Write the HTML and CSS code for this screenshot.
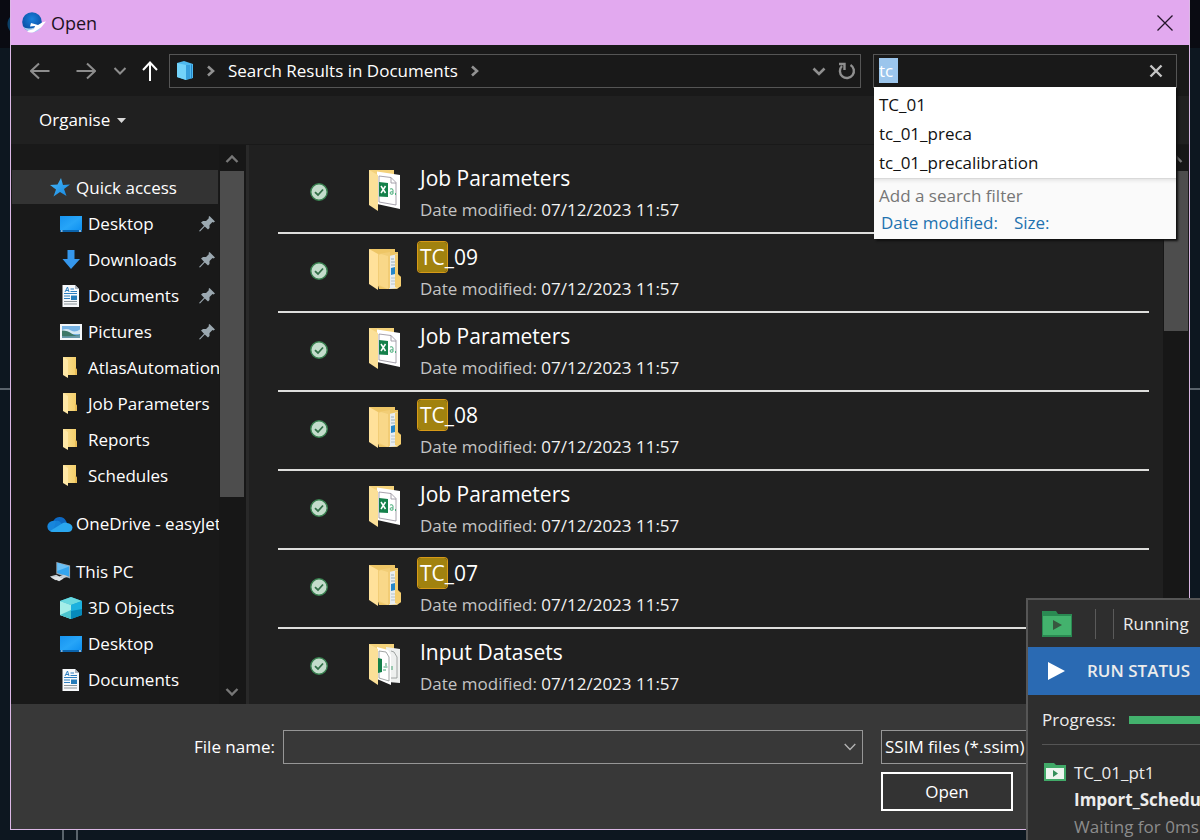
FILE: index.html
```html
<!DOCTYPE html>
<html lang="en-GB">
<head>
<meta charset="utf-8">
<title>Open</title>
<link rel="stylesheet" href="styles.css">
</head>
<body>
<svg class="sprite" aria-hidden="true">
  <defs>
    <linearGradient id="g-desk" x1="0" y1="0" x2="1" y2="1"><stop offset="0" stop-color="#1793f0"/><stop offset=".5" stop-color="#27a5f8"/><stop offset="1" stop-color="#0a8df0"/></linearGradient>
    <linearGradient id="g-fold" x1="0" y1="0" x2="1" y2="0"><stop offset="0" stop-color="#fbe29a"/><stop offset="1" stop-color="#f3cd66"/></linearGradient>
    <linearGradient id="g-star" x1="0" y1="0" x2="1" y2="1"><stop offset="0" stop-color="#4ab9f8"/><stop offset="1" stop-color="#1486e0"/></linearGradient>
    <radialGradient id="g-globe" cx=".5" cy=".35" r=".6"><stop offset="0" stop-color="#1a80dc"/><stop offset="1" stop-color="#0a4fa4"/></radialGradient>
  </defs>
  <symbol id="desktop" viewBox="0 0 22 22"><path d="M0 3h22v16H0z" fill="url(#g-desk)"/><path d="M0 17h22v2H0z" fill="#0a64ad"/><path d="M1 18h1.500M19 18h2" stroke="#fff"/></symbol>
  <symbol id="download" viewBox="0 0 22 22"><path d="M7.500 1h7v9H20l-9 10L2.500 10h5z" fill="#3597ec"/></symbol>
  <symbol id="document" viewBox="0 0 22 22"><path d="M2.500 0H15l4 4v18H2.500z" fill="#f7f9fb"/><path d="M15 0v4h4z" fill="#aab4bd"/><path d="M5 7l2.500-5L9 7M6 5.500h3M10.500 4H14M10.500 6.500H17M4 8.500h13M4 11h6M4 13.500h6" stroke="#2d7fc0" fill="none"/><path d="M11 10.500h6V15h-6z" fill="#257cba"/><path d="M4 16.500h13M4 19h13" stroke="#8b9499"/></symbol>
  <symbol id="picture" viewBox="0 0 22 22"><path d="M0 3h22v16H0z" fill="#f3f6f8"/><path d="M2 5h18v12H2z" fill="#77b3e4"/><path d="M2 9q5-2 9 .5t9-1V13H2z" fill="#d6e8f3"/><path d="M2 9.500q6 0 9.500 3t8.500 1V16H2z" fill="#3e7866"/><path d="M2 15q9 1 18-1v3H2z" fill="#6798a8"/></symbol>
  <symbol id="folder" viewBox="0 0 22 22"><path d="M3 0h13v11l1 2v5H7z" fill="url(#g-fold)"/><path d="M3 0l5 3v18l-5-3z" fill="#ffe8a6"/><path d="M15 10l2 3v5h-2z" fill="#e9bd57"/></symbol>
  <symbol id="star" viewBox="0 0 22 22"><path d="M12 1l2 7 7-.5-6 4.500 2.500 7-6.500-4-6.500 4.500 2.500-7-6-4.500 7.500-.5z" fill="url(#g-star)"/></symbol>
  <symbol id="cloud" viewBox="0 0 26 18"><path d="M6 7a7 7 0 0 1 13-1l2 4-14 4z" fill="#0d68c2"/><path d="M1 9q3-4 8-3l8 5-11 6a5.500 5.500 0 0 1-5-8z" fill="#1786dc"/><path d="M9 6q3-1 5 2l8 7-5 2H6z" fill="#1480d7"/><path d="M3 16l13-8q2-1 4 0 5 .5 5.500 4.500Q25 17 21 17H6q-2 0-3-1z" fill="#2aa7ef"/></symbol>
  <symbol id="pc" viewBox="0 0 24 24"><path d="M8 1l15 4v14L8 14z" fill="#9aaab5"/><path d="M9 2l13 4v11L9 13z" fill="#35a5ee"/><path d="M9 2l13 4-13 5z" fill="#6bc0f5"/><path d="M1 17l7-2 5 3-6 3zM11 17l5-2 5 2-6 2z" fill="#c4ccd2"/><path d="M2 18l8-1 6 2-5 3z" fill="#dfe3e5"/></symbol>
  <symbol id="cube" viewBox="0 0 22 22"><path d="M11 0l11 4v14l-11 4-11-4V4z" fill="#19a7cb"/><path d="M0 4l11-4 11 4-11 4z" fill="#69d9df"/><path d="M0 4l11 4v14L0 18z" fill="#a4eee8"/><path d="M0 18l11-5v9z" fill="#4bc4ce"/><path d="M11 22V13l11-9v14z" fill="#068abb"/><path d="M11 8l11-4v8l-11 2z" fill="#1cb1df"/></symbol>
  <symbol id="pin" viewBox="0 0 16 16"><path d="M10.500 0L16 5.500l-1.500 1-1-.5-3 3v3L9 13.500 5.800 10.500 1 15.500 0 15l5-5.300L2 6.500 4 5h3l3-3-.5-1z" fill="#9ba8b0"/></symbol>
  <symbol id="check" viewBox="0 0 18 18"><circle cx="9" cy="9" r="8.200" fill="#c3dccb" stroke="#398250" stroke-width="1.400"/><path d="M5 9.200l3 2.800 5-5.500" fill="none" stroke="#326f48" stroke-width="1.800"/></symbol>
  <symbol id="folder-xls" viewBox="0 0 32 42"><path d="M0 1h25v30H0z" fill="#f4d27b"/><path d="M8 2.500L31 6v34L8 35z" fill="#fff"/><path d="M10 7l12 1.500 5 5V36L10 33zM22 8.500V14h5" fill="none" stroke="#918b98" stroke-width=".8"/><path d="M0 1l9 5v36l-9-6z" fill="#fbe098"/><path d="M10 13l9 1v14l-9-.5z" fill="#14804a"/><path d="M12 17l4.500 7M16.500 17L12 24" stroke="#fff" stroke-width="1.500"/><path d="M21 20q3-1 3 1v4q-3 1-3-1t3-1M26.500 24v2" fill="none" stroke="#4bad7c"/></symbol>
  <symbol id="folder-docs" viewBox="0 0 32 42"><path d="M0 1h26v3h3v22l3 3v9l-4 3H10z" fill="#eec666"/><path d="M20 8l9-2v34l-9 1z" fill="#e9edf0"/><path d="M22 11h3M22 14h4M22 17h4" stroke="#98afba"/><path d="M22 20l4-1v7l-4 1z" fill="#2586c9"/><path d="M22 30h4M22 33h4M22 36h4" stroke="#b7c4cb"/><path d="M9 6l12-2v36l-3 1-9-3z" fill="#f2cd76"/><path d="M0 1l9 5v36l-9-6z" fill="#ffe19a"/><path d="M12 6l7 2v33l-9-4V7z" fill="#f9d889"/><path d="M26 7l3-1v21l3 2v9l-4 2-2-1z" fill="#f5ce70"/></symbol>
  <symbol id="folder-data" viewBox="0 0 32 42"><path d="M0 1h25v30H0z" fill="#f4d27b"/><path d="M17 4l14 2v34l-12-1z" fill="#eef0ef"/><path d="M8 4l11 3 3 5v30L8 36z" fill="#fff"/><path d="M10 8l7 1 3 5v24l-10-3zM22 8l3 1 3 5v21h-6" fill="none" stroke="#8b908f" stroke-width=".8"/><path d="M0 1l9 5v36l-9-6z" fill="#fbe098"/><path d="M9 15l4 1v13l-4 1z" fill="#14804a"/><path d="M17 20v3M14.500 24h4M23 23v4M14 27h3" stroke="#43a070"/></symbol>
</svg>

<div class="desktop">
  <main class="dialog">
    <header class="titlebar">
      <svg class="app-icon" viewBox="0 0 24 22" aria-hidden="true"><circle cx="10" cy="10" r="9.800" fill="url(#g-globe)"/><path d="M1 15q7 4 20-3l-4 6q-8 6-16-3z" fill="#a9d0f2"/><path d="M9 11l7 2 5-3 3-.5-5 6-7 4.500q-5 1.500-7-1l7-2 1-3-5 .5z" fill="#fff"/></svg>
      <h1>Open</h1>
      <button class="close" aria-label="Close"><svg viewBox="0 0 16 16"><path d="M.5.5l15 15M15.500.5l-15 15" stroke="#24152a" stroke-width="1.300"/></svg></button>
    </header>

    <div class="navbar">
      <nav class="history" aria-label="History">
        <button aria-label="Back"><svg viewBox="0 0 20 20"><path d="M19.500 10H1M9 2.500L1 10l8 7.500" stroke="#8d8d8d"/></svg></button>
        <button aria-label="Forward"><svg viewBox="0 0 20 20"><path d="M.5 10H19M11 2.500l8 7.500-8 7.500" stroke="#8d8d8d"/></svg></button>
        <button class="small" aria-label="Recent locations"><svg viewBox="0 0 14 20"><path d="M1.500 7L7 12.500 12.500 7" stroke="#8d8d8d"/></svg></button>
        <button aria-label="Up"><svg viewBox="0 0 20 20"><path d="M10 20V2M3 9l7-7.500L17 9" stroke="#fff"/></svg></button>
      </nav>
      <div class="address">
        <svg class="lib" viewBox="0 0 18 20" aria-hidden="true"><path d="M1 2l7-2 9 3v14l-7 2-9-3z" fill="#4eb9ee"/><path d="M1 2l9 2v15l-9-3z" fill="#73d3fa"/><path d="M11 4v14M13 4v14M15.500 3.500v14" stroke="#2387cc"/></svg>
        <svg class="crumb" viewBox="0 0 10 14" aria-hidden="true"><path d="M2 2.500L7 7l-5 4.500"/></svg>
        <span>Search Results in Documents</span>
        <svg class="crumb" viewBox="0 0 10 14" aria-hidden="true"><path d="M2 2.500L7 7l-5 4.500"/></svg>
        <button class="push" aria-label="Previous locations"><svg width="14" height="14" viewBox="0 0 14 14"><path d="M1.500 4.500L7 10l5.500-5.500" fill="none" stroke="#8f8f8f" stroke-width="2.600"/></svg></button>
        <button aria-label="Refresh"><svg width="18" height="18" viewBox="0 0 18 18"><path d="M12.500 3a7 7 0 1 1-8.500 1M1 2h5.500v6" fill="none" stroke="#8f8f8f" stroke-width="2.400"/></svg></button>
      </div>
      <div class="search">
        <input type="text" aria-label="Search" value="tc">
        <button aria-label="Clear search"><svg width="14" height="14" viewBox="0 0 14 14"><path d="M1.500 1.500l11 11M12.500 1.500l-11 11" stroke="#c6c6c6" stroke-width="2.400"/></svg></button>
        <div class="suggest">
          <ul>
            <li>TC_01</li>
            <li>tc_01_preca</li>
            <li>tc_01_precalibration</li>
          </ul>
          <div class="filters">
            <p>Add a search filter</p>
            <div class="filter-links"><a href="#date">Date modified:</a><a href="#size">Size:</a></div>
          </div>
        </div>
      </div>
    </div>

    <div class="toolbar"><button>Organise <svg width="9" height="5" viewBox="0 0 9 5" aria-hidden="true"><path d="M0 0h9L4.500 5z" fill="#d8d8d8"/></svg></button></div>

    <div class="content">
      <aside class="sidebar">
        <div class="tree">
          <ul>
            <li class="root selected"><svg><use href="#star"/></svg><span>Quick access</span></li>
            <li><svg><use href="#desktop"/></svg><span>Desktop</span><svg class="pin"><use href="#pin"/></svg></li>
            <li><svg><use href="#download"/></svg><span>Downloads</span><svg class="pin"><use href="#pin"/></svg></li>
            <li><svg><use href="#document"/></svg><span>Documents</span><svg class="pin"><use href="#pin"/></svg></li>
            <li><svg><use href="#picture"/></svg><span>Pictures</span><svg class="pin"><use href="#pin"/></svg></li>
            <li><svg><use href="#folder"/></svg><span>AtlasAutomation</span></li>
            <li><svg><use href="#folder"/></svg><span>Job Parameters</span></li>
            <li><svg><use href="#folder"/></svg><span>Reports</span></li>
            <li><svg><use href="#folder"/></svg><span>Schedules</span></li>
          </ul>
          <ul><li class="root"><svg><use href="#cloud"/></svg><span>OneDrive - easyJet</span></li></ul>
          <ul>
            <li class="root"><svg><use href="#pc"/></svg><span>This PC</span></li>
            <li><svg><use href="#cube"/></svg><span>3D Objects</span></li>
            <li><svg><use href="#desktop"/></svg><span>Desktop</span></li>
            <li><svg><use href="#document"/></svg><span>Documents</span></li>
          </ul>
        </div>
        <div class="scroll">
          <svg viewBox="0 0 14 10"><path d="M1.500 8L7 2.500 12.500 8"/></svg>
          <div class="thumb"></div>
          <svg viewBox="0 0 14 10"><path d="M1.500 2L7 7.500 12.500 2"/></svg>
        </div>
      </aside>

      <section class="results">
        <ul>
          <li><svg class="sync"><use href="#check"/></svg><svg class="kind"><use href="#folder-xls"/></svg><div><h2>Job Parameters</h2><p>Date modified: <time>07/12/2023 11:57</time></p></div></li>
          <li><svg class="sync"><use href="#check"/></svg><svg class="kind"><use href="#folder-docs"/></svg><div><h2><mark>TC</mark>_09</h2><p>Date modified: <time>07/12/2023 11:57</time></p></div></li>
          <li><svg class="sync"><use href="#check"/></svg><svg class="kind"><use href="#folder-xls"/></svg><div><h2>Job Parameters</h2><p>Date modified: <time>07/12/2023 11:57</time></p></div></li>
          <li><svg class="sync"><use href="#check"/></svg><svg class="kind"><use href="#folder-docs"/></svg><div><h2><mark>TC</mark>_08</h2><p>Date modified: <time>07/12/2023 11:57</time></p></div></li>
          <li><svg class="sync"><use href="#check"/></svg><svg class="kind"><use href="#folder-xls"/></svg><div><h2>Job Parameters</h2><p>Date modified: <time>07/12/2023 11:57</time></p></div></li>
          <li><svg class="sync"><use href="#check"/></svg><svg class="kind"><use href="#folder-docs"/></svg><div><h2><mark>TC</mark>_07</h2><p>Date modified: <time>07/12/2023 11:57</time></p></div></li>
          <li><svg class="sync"><use href="#check"/></svg><svg class="kind"><use href="#folder-data"/></svg><div><h2>Input Datasets</h2><p>Date modified: <time>07/12/2023 11:57</time></p></div></li>
        </ul>
        <div class="scroll">
          <svg viewBox="0 0 14 10"><path d="M1.500 8L7 2.500 12.500 8"/></svg>
          <div class="thumb short"></div>
        </div>
      </section>
    </div>

    <footer class="footer">
      <label for="filename">File name:</label>
      <div class="combo">
        <input id="filename" type="text">
        <button aria-label="Recent file names"><svg width="12" height="8" viewBox="0 0 12 8"><path d="M.7 1L6 6.500 11.300 1" fill="none" stroke="#b4b4b4" stroke-width="1.300"/></svg></button>
      </div>
      <div class="actions">
        <select aria-label="File type"><option>SSIM files (*.ssim)</option></select>
        <button class="open">Open</button>
      </div>
    </footer>
  </main>

  <section class="monitor" aria-label="Run monitor">
    <header>
      <svg width="30" height="26" viewBox="0 0 30 26" aria-hidden="true"><path d="M0 0h14l2 3h14v23H0z" fill="#2a8a52"/><path d="M1 5h28v19H1z" fill="#43b26d"/><path d="M11 9l9 5-9 5z" fill="#38573f"/></svg>
      <i></i><i></i><span>Running</span>
    </header>
    <h2><svg width="17" height="18" viewBox="0 0 17 18" aria-hidden="true"><path d="M0 0l17 9-17 9z" fill="#fff"/></svg>RUN STATUS</h2>
    <div class="progress"><label for="run">Progress:</label><progress id="run" value="100" max="100"></progress></div>
    <div class="job">
      <svg width="22" height="18" viewBox="0 0 22 18" aria-hidden="true"><path d="M0 0h10l2 2h10v16H0z" fill="#41a968"/><path d="M2 5h18v11H2z" fill="#edf5ef"/><path d="M9 7l5 3.500L9 14z" fill="#33905a"/></svg>
      <div><p>TC_01_pt1</p><p><strong>Import_Schedule</strong></p><p class="dim">Waiting for 0ms</p></div>
    </div>
  </section>
</div>
</body>
</html>
```

FILE: styles.css
```css
* { box-sizing: border-box; }
body, h1, h2, p, ul { margin: 0; padding: 0; }
ul { list-style: none; }
body { font: 17px/24px "Open Sans", "Noto Sans", sans-serif; color: #fff; background: #0d1720; }
button { margin: 0; padding: 0; border: 0; background: none; color: inherit; font: inherit; display: flex; align-items: center; }
input, select { font: inherit; color: inherit; }
svg { display: block; flex: none; }
.sprite { position: absolute; width: 0; height: 0; }

.desktop {
  position: relative;
  height: 100vh;
  min-height: 600px;
  overflow: hidden;
  display: flex;
  flex-direction: column;
  padding: 0 10px 10px;
  background:
    linear-gradient(#59636b, #59636b) 0 388px / 100% 2px no-repeat,
    linear-gradient(#59636b, #59636b) 62px 100% / 2px 10px no-repeat,
    linear-gradient(#59636b, #59636b) 76px 100% / 2px 10px no-repeat,
    radial-gradient(circle at 18px 24px, #0b3f66 10px, transparent 11px),
    linear-gradient(#0a0b12 48px, #0d1720 48px);
}
.dialog { flex: 1; min-height: 0; display: flex; flex-direction: column; background: #202020; border: 1px solid #dcb8e6; border-top: 0; }

.titlebar { height: 45px; display: flex; align-items: center; gap: 5px; padding: 0 16px 0 11px; background: #e2a9ef; color: #1d1122; }
.titlebar h1 { font-size: 18px; font-weight: 400; }
.app-icon { width: 24px; height: 22px; }
.close { margin-left: auto; }
.close svg { width: 16px; height: 16px; }

.navbar { height: 51px; display: flex; align-items: center; background: #191919; padding: 0 12px 0 19px; }
.history { display: flex; align-items: center; gap: 26px; margin-right: 9px; }
.history svg { width: 20px; height: 20px; fill: none; stroke-width: 2; }
.history button + .small { margin-left: -9px; }
.history .small svg { width: 14px; }
.history .small + button { margin-left: -13px; }
.address { flex: 1; height: 34px; display: flex; align-items: center; gap: 12px; padding: 0 4px 0 6px; border: 1px solid #555; }
.lib { width: 18px; height: 20px; }
.crumb { width: 10px; height: 14px; fill: none; stroke: #929292; stroke-width: 2.6; }
.push { margin-left: auto; }
.search { position: relative; width: 304px; height: 34px; margin-left: 12px; display: flex; align-items: center; padding: 0 13px 0 5px; border: 1px solid #555; }
.search input { flex: 1; min-width: 0; height: 25px; padding: 0; border: 0; outline: 0; background: linear-gradient(#9bc5ec, #9bc5ec) 0 0 / 19px 100% no-repeat; }
.suggest { position: absolute; z-index: 2; top: 32px; left: 0; right: 0; background: #fff; color: #111; box-shadow: 2px 2px 2px #101010; }
.suggest ul { padding: 3px 5px 1px; }
.suggest li { height: 29px; line-height: 29px; }
.filters { padding: 3px 5px 0; border-top: 1px solid #d9d9d9; background: #fafafa; color: #767676; line-height: 28px; box-shadow: inset 0 4px 4px -3px #ddd; }
.filter-links { display: flex; gap: 16px; padding: 0 2px 3px; line-height: 26px; }
.filter-links a { color: #2272b0; text-decoration: none; }

.toolbar { height: 48px; display: flex; align-items: center; padding: 0 28px; }
.toolbar button { gap: 7px; }

.content { flex: 1; min-height: 0; display: flex; border-top: 1px solid #191919; }
.sidebar { width: 238px; display: flex; background: #191919; border-right: 3px solid #292929; }
.tree { flex: 1; min-width: 0; overflow: hidden; padding: 25px 0 0 1px; }
.tree ul { margin-bottom: 12px; }
.tree li { height: 36px; display: flex; align-items: center; gap: 6px; padding-left: 48px; white-space: nowrap; }
.tree li svg { width: 22px; height: 22px; }
.tree li.root { gap: 3px; padding-left: 35px; }
.tree li.root svg { width: 26px; height: 22px; }
.tree li.selected { background: linear-gradient(#333, #333) 0 0 / calc(100% - 1px) 34px no-repeat; }
.tree li svg.pin { width: 16px; height: 16px; margin: 0 4px 0 auto; }
.scroll { flex: none; width: 27px; display: flex; flex-direction: column; align-items: center; padding: 9px 2px 7px 1px; background: #171717; }
.scroll svg { width: 14px; height: 10px; fill: none; stroke: #777; stroke-width: 2.4; }
.scroll svg:last-child { margin-top: auto; }
.scroll .thumb { width: 24px; height: 326px; margin-top: 7px; background: #4d4d4d; }
.results .scroll { width: 26px; padding: 9px 1px 7px; }
.scroll .thumb.short { height: 160px; }

.results { flex: 1; min-width: 0; display: flex; overflow: hidden; }
.results ul { flex: 1; padding: 10px 14px 0 29px; }
.results li { height: 79px; display: flex; align-items: center; padding-left: 32px; border-bottom: 2px solid #dededc; }
.results li:last-child { border-color: transparent; }
.sync { width: 18px; height: 18px; margin: 0 41px 4px 0; }
.kind { width: 32px; height: 42px; margin: 0 19px 8px 0; }
.results h2 { font-size: 21px; font-weight: 400; line-height: 32px; }
.results p { line-height: 31px; color: #c4c4c4; }
.results time { color: #f2f2f2; }
mark { color: inherit; background: #a1820f; box-shadow: 0 0 0 1px #d79a17; border-radius: 3px; padding: 1px 2px; margin: 0 -2px; }

.footer { height: 125px; display: flex; align-items: flex-start; padding: 26px 12px 0; background: #383838; }
.footer label { width: 252px; margin-right: 8px; line-height: 34px; text-align: right; }
.combo { flex: 1; height: 34px; display: flex; border: 1px solid #969696; }
.combo input { flex: 1; min-width: 0; border: 0; outline: 0; background: none; }
.combo button { width: 25px; justify-content: center; }
.actions { width: 296px; margin-left: 18px; display: flex; flex-direction: column; gap: 8px; }
.actions select { appearance: none; height: 34px; padding: 0 3px; border: 1px solid #969696; border-radius: 0; background: #333; }
.open { width: 132px; height: 39px; justify-content: center; border: 2px solid #fff; background: #333; }

.monitor { position: absolute; right: 0; bottom: 0; z-index: 3; width: 174px; height: 242px; overflow: hidden; white-space: nowrap; color: #ececec; background: #2e2e2e; border: 2px solid #565656; border-width: 2px 0 0 2px; }
.monitor header { height: 47px; display: flex; align-items: center; padding-left: 14px; }
.monitor header svg { margin-right: 23px; }
.monitor i { width: 18px; height: 30px; border-left: 1px solid #5a5a5a; }
.monitor header i + span { margin-left: -8px; }
.monitor h2 { height: 48px; display: flex; align-items: center; gap: 22px; padding-left: 20px; font-size: 17px; font-weight: 600; background: #2a6ab3; }
.progress { display: flex; align-items: center; gap: 13px; height: 50px; margin-left: 14px; border-bottom: 1px solid #555; }
.progress progress { appearance: none; width: 200px; height: 8px; flex: none; border: 0; background: #43b26d; }
.progress progress::-webkit-progress-bar { background: #555; }
.progress progress::-webkit-progress-value { background: #43b26d; }
.job { display: flex; gap: 8px; padding: 14px 0 0 16px; line-height: 27px; }
.job svg { margin-top: 4px; }
.job strong { font-weight: 700; }
.dim { color: #8c8c8c; }
```
